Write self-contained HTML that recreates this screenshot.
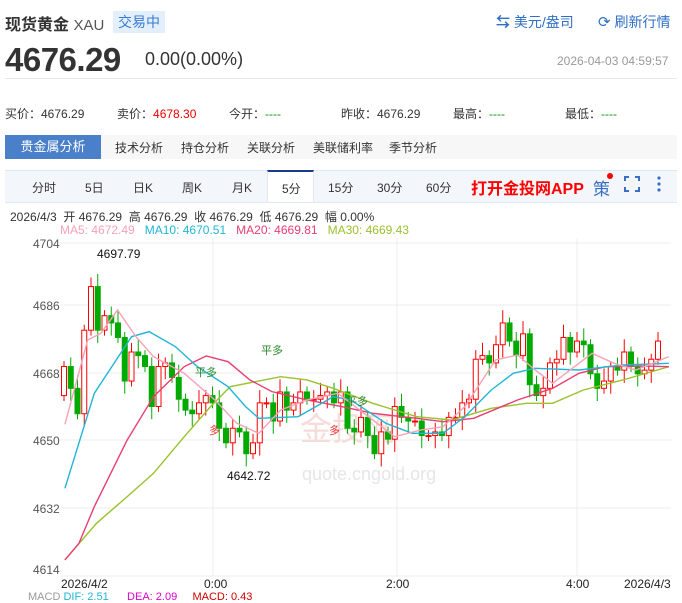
<!DOCTYPE html>
<html><head><meta charset="utf-8"><style>
body{margin:0;width:682px;height:593px;overflow:hidden;background:#fff;font-family:"Liberation Sans","Noto Sans CJK SC",sans-serif;color:#333;position:relative}
.a{position:absolute;white-space:nowrap}
</style></head><body>
<div class="a" style="left:5px;top:11px;font-size:16px;font-weight:bold;color:#333">现货黄金 <span style="font-weight:normal;color:#555;font-size:15px">XAU</span></div>
<div class="a" style="left:113px;top:11px;width:52px;height:22px;background:#e3effb;color:#3a7bd5;font-size:14px;line-height:22px;text-align:center">交易中</div>
<div class="a" style="left:496px;top:12px;font-size:14px;color:#2f6fc5"><b>⇆</b> 美元/盎司</div>
<div class="a" style="left:598px;top:12px;font-size:14px;color:#2f6fc5"><span style="font-size:15px">⟳</span> 刷新行情</div>
<div class="a" style="left:5px;top:41px;font-size:33px;font-weight:bold;color:#333;letter-spacing:-0.5px">4676.29</div>
<div class="a" style="left:145px;top:49px;font-size:18px;color:#333">0.00(0.00%)</div>
<div class="a" style="left:557px;top:54px;font-size:12px;color:#999">2026-04-03 04:59:57</div>
<div class="a" style="left:5px;top:78px;width:672px;height:1px;background:#e8e8e8"></div>
<div class="a" style="left:5px;top:105px;font-size:12px;color:#333">买价：4676.29</div>
<div class="a" style="left:117px;top:105px;font-size:12px;color:#333">卖价：<span style="color:#e00">4678.30</span></div>
<div class="a" style="left:229px;top:105px;font-size:12px;color:#333">今开：<span style="color:#090">----</span></div>
<div class="a" style="left:341px;top:105px;font-size:12px;color:#333">昨收：4676.29</div>
<div class="a" style="left:453px;top:105px;font-size:12px;color:#333">最高：<span style="color:#090">----</span></div>
<div class="a" style="left:565px;top:105px;font-size:12px;color:#333">最低：<span style="color:#090">----</span></div>
<div class="a" style="left:5px;top:135px;width:96px;height:24px;background:#4a7fc9;color:#fff;font-size:13px;line-height:24px;text-align:center">贵金属分析</div>
<div class="a" style="left:101px;top:135px;width:576px;height:24px;background:#f7f7f7"></div>
<div class="a" style="left:115px;top:139px;font-size:12px">技术分析</div>
<div class="a" style="left:181px;top:139px;font-size:12px">持仓分析</div>
<div class="a" style="left:247px;top:139px;font-size:12px">关联分析</div>
<div class="a" style="left:313px;top:139px;font-size:12px">美联储利率</div>
<div class="a" style="left:389px;top:139px;font-size:12px">季节分析</div>
<div class="a" style="left:5px;top:170px;width:672px;height:31px;background:#f3f7fc;border-top:1px solid #dfe8f3;border-bottom:1px solid #dfe8f3"></div>
<div class="a" style="left:267px;top:170px;width:47px;height:32px;background:#fff;border-top:2px solid #1a3a8a;border-left:1px solid #dfe8f3;border-right:1px solid #dfe8f3;box-sizing:border-box"></div>
<div class="a" style="top:179px;left:32px;font-size:12px">分时</div>
<div class="a" style="top:179px;left:85px;font-size:12px">5日</div>
<div class="a" style="top:179px;left:133px;font-size:12px">日K</div>
<div class="a" style="top:179px;left:182px;font-size:12px">周K</div>
<div class="a" style="top:179px;left:232px;font-size:12px">月K</div>
<div class="a" style="top:180px;left:282px;font-size:12px">5分</div>
<div class="a" style="top:179px;left:328px;font-size:12px">15分</div>
<div class="a" style="top:179px;left:377px;font-size:12px">30分</div>
<div class="a" style="top:179px;left:426px;font-size:12px">60分</div>
<div class="a" style="top:175px;left:471px;font-size:16px;font-weight:bold;color:#f00">打开金投网APP</div>
<div class="a" style="top:175px;left:593px;font-size:17px;color:#3a6fc0">策</div>
<div class="a" style="top:173px;left:607px;width:6px;height:6px;border-radius:3px;background:#f00"></div>
<svg class="a" style="left:624px;top:176px" width="16" height="16"><path d="M1 5V1H5M11 1H15V5M15 11V15H11M5 15H1V11" fill="none" stroke="#3a6fc0" stroke-width="2"/></svg>
<svg class="a" style="left:656px;top:176px" width="6" height="16"><circle cx="3" cy="2" r="1.6" fill="#3a6fc0"/><circle cx="3" cy="8" r="1.6" fill="#3a6fc0"/><circle cx="3" cy="14" r="1.6" fill="#3a6fc0"/></svg>
<div class="a" style="left:10px;top:208px;font-size:12px;color:#333">2026/4/3 &nbsp;开 4676.29 &nbsp;高 4676.29 &nbsp;收 4676.29 &nbsp;低 4676.29 &nbsp;幅 0.00%</div>
<div class="a" style="left:60px;top:223px;font-size:12px"><span style="color:#f7a1b8">MA5: 4672.49</span> &nbsp;&nbsp;<span style="color:#1fb6d6">MA10: 4670.51</span> &nbsp;&nbsp;<span style="color:#e83e72">MA20: 4669.81</span> &nbsp;&nbsp;<span style="color:#9bc12c">MA30: 4669.43</span></div>
<svg class="a" style="left:0;top:0" width="682" height="593" id="ch">
<g stroke="#ececec" stroke-width="1">
<line x1="60" y1="243" x2="671" y2="243"/><line x1="60" y1="305" x2="671" y2="305"/><line x1="60" y1="373" x2="671" y2="373"/><line x1="60" y1="440" x2="671" y2="440"/><line x1="60" y1="508" x2="671" y2="508"/><line x1="60" y1="576" x2="671" y2="576"/>
<line x1="213" y1="238" x2="213" y2="576"/><line x1="397" y1="238" x2="397" y2="576"/><line x1="577" y1="238" x2="577" y2="576"/>
</g>
<g font-size="12" fill="#555" font-family="Liberation Sans, sans-serif">
<text x="33" y="248">4704</text><text x="33" y="310">4686</text><text x="33" y="378">4668</text><text x="33" y="445">4650</text><text x="33" y="513">4632</text><text x="33" y="574">4614</text>
<text x="61" y="588" fill="#222">2026/4/2</text><text x="204" y="588" fill="#222">0:00</text><text x="386" y="588" fill="#222">2:00</text><text x="566" y="588" fill="#222">4:00</text><text x="624" y="588" fill="#222">2026/4/3</text>
</g>
<text x="300" y="440" font-size="32" fill="#f6dcd8" font-family="Noto Sans CJK SC,sans-serif">金投网</text>
<text x="302" y="480" font-size="18" fill="#e6e6e6">quote.cngold.org</text>
<g id="cd"></g>
<g transform="translate(0,230) scale(0.4386,0.3333)" fill="none" stroke-width="1.4">
<polyline vector-effect="non-scaling-stroke" stroke="#9bc12c" points="148,990 220,880 290,800 350,730 420,620 480,530 525,470 640,440 700,450 760,475 850,520 950,560 1030,570 1120,535 1200,520 1260,520 1330,480 1420,450 1525,410"/>
<polyline vector-effect="non-scaling-stroke" stroke="#e83e72" points="148,990 180,940 215,830 290,630 350,500 420,410 470,378 520,395 570,450 620,485 700,510 780,530 850,550 950,565 1010,575 1080,565 1180,510 1260,475 1320,430 1380,410 1460,408 1525,410"/>
<polyline vector-effect="non-scaling-stroke" stroke="#1fb6d6" points="148,775 215,490 270,380 300,320 340,305 400,350 450,410 520,470 560,530 590,565 680,560 760,500 800,510 880,580 940,610 1010,610 1060,560 1120,480 1170,430 1220,415 1320,420 1420,405 1525,400"/>
<polyline vector-effect="non-scaling-stroke" stroke="#f7a1b8" points="148,583 200,330 230,310 268,240 310,320 350,380 420,430 490,510 540,580 590,610 640,540 700,510 770,490 830,550 900,620 960,600 1010,590 1060,530 1130,390 1180,375 1220,420 1260,460 1300,420 1350,370 1400,400 1450,420 1525,380"/>
</g>
<g font-size="12" fill="#111"><text x="97" y="258">4697.79</text><text x="227" y="480">4642.72</text></g>
<g font-size="11" fill="#2a8a2a"><text x="261" y="354">平多</text><text x="195" y="376">平多</text><text x="346" y="405">平多</text></g>
<g font-size="11" fill="#e33"><text x="209" y="434">多</text><text x="329" y="434">多</text></g>
</svg>
<div class="a" style="left:28px;top:591px;font-size:11px;color:#999">MACD <span style="color:#1fb6d6">DIF: 2.51</span> &nbsp;&nbsp;&nbsp;&nbsp;&nbsp;<span style="color:#d0c">DEA: 2.09</span> &nbsp;&nbsp;&nbsp;&nbsp;<span style="color:#c00">MACD: 0.43</span></div>
<script>
var c=[4670,4664,4657,4680,4692,4680,4684,4682,4678,4666,4674,4673,4670,4659,4670,4671,4667,4661,4658,4657,4660,4662,4660,4653,4649,4653,4652,4646,4649,4660,4660,4655,4663,4658,4660,4663,4661,4661,4662,4663,4660,4663,4653,4652,4656,4651,4646,4652,4650,4659,4656,4655,4655,4651,4651,4652,4651,4656,4656,4660,4661,4672,4673,4671,4676,4682,4677,4673,4679,4665,4662,4664,4671,4672,4678,4674,4677,4676,4668,4664,4666,4670,4669,4674,4670,4668,4669,4672,4677];
var s='',n=c.length,o=4662;
for(var i=0;i<n;i++){var x=64+i*(594/(n-1)),cl=c[i],op=o,hi=Math.max(op,cl)+1.5+(i%3),lo=Math.min(op,cl)-1.5-(i%2)*2;
var Y=function(p){return 243+(4704-p)*3.633};var up=cl>=op,col=up?'#f00':'#0a0';
var t=Y(Math.max(op,cl)),b=Y(Math.min(op,cl));if(b-t<1)b=t+1;
s+='<line x1="'+x+'" x2="'+x+'" y1="'+Y(hi)+'" y2="'+Y(lo)+'" stroke="'+col+'"/>';
s+='<rect x="'+(x-2.5)+'" y="'+t+'" width="5" height="'+(b-t)+'" fill="'+(up?'#fff':col)+'" stroke="'+col+'"/>';o=cl;}
document.getElementById('cd').innerHTML=s;
</script>
</body></html>
